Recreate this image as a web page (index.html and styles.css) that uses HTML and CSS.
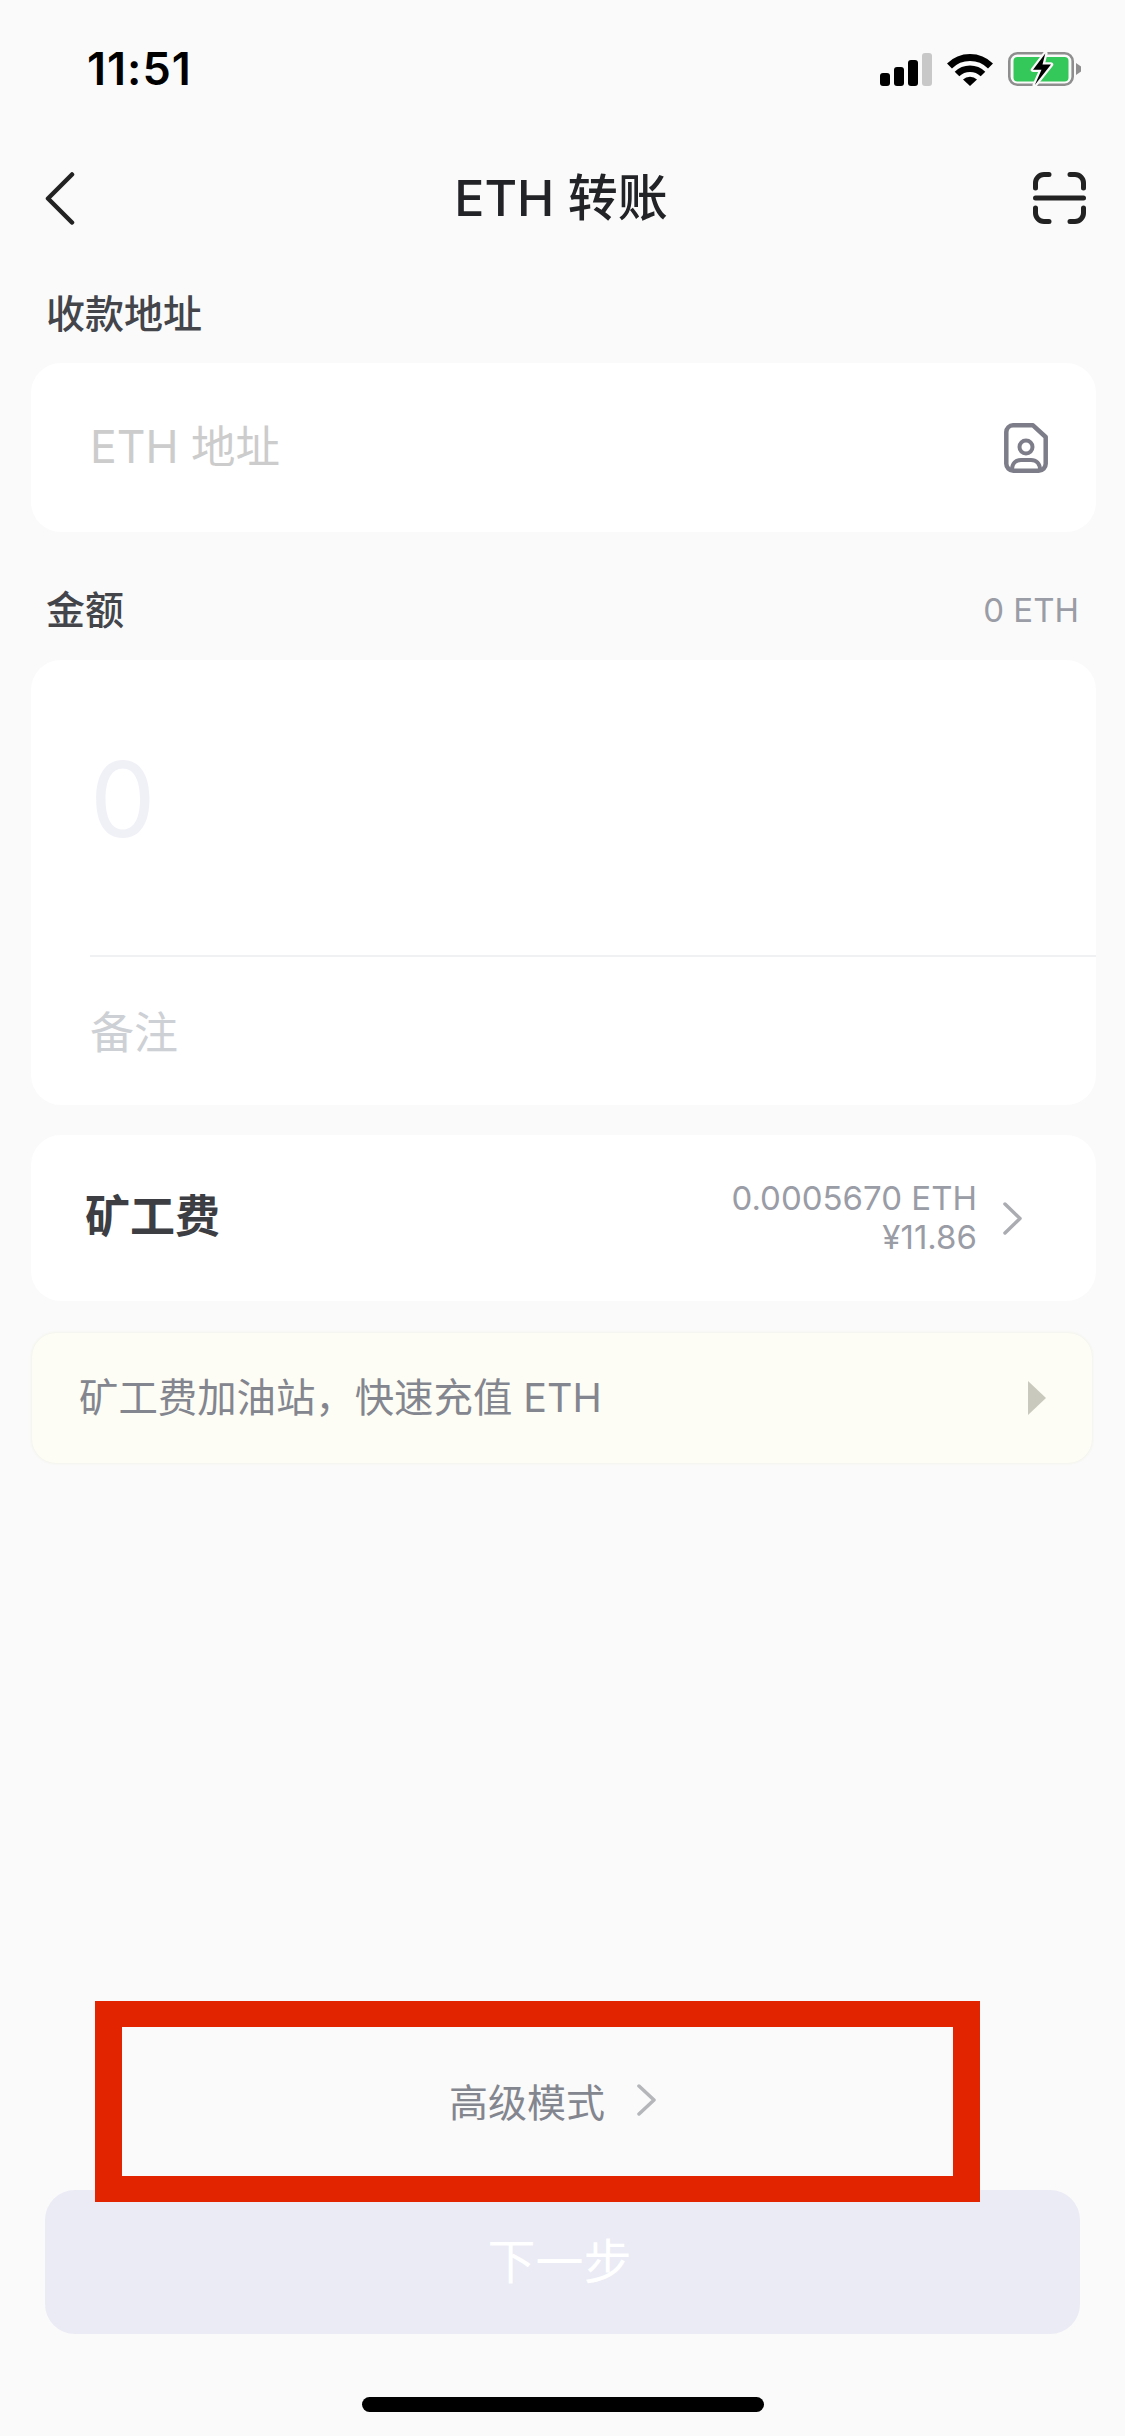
FILE: index.html
```html
<!DOCTYPE html>
<html lang="zh-CN">
<head>
<meta charset="utf-8">
<title>ETH 转账</title>
<link rel="stylesheet" href="styles.css">
</head>
<body>
<div class="page">
  <header class="status">
    <span class="time">11:51</span>
    <div class="status-icons">
      <svg class="i-signal" width="52" height="33" viewBox="0 0 52 33"><rect x="0" y="20" width="10" height="13" rx="3" fill="#000"/><rect x="14" y="14" width="10" height="19" rx="3" fill="#000"/><rect x="28" y="7" width="10" height="26" rx="3" fill="#000"/><rect x="42" y="0" width="10" height="33" rx="3" fill="#c8c8c8"/></svg>
      <svg class="i-wifi" width="46" height="33" viewBox="0 0 46 33"><path d="M2.500 13A29 29 0 0 1 43.500 13" fill="none" stroke="#000" stroke-width="7"/><path d="M10 21A18.500 18.500 0 0 1 36 21" fill="none" stroke="#000" stroke-width="6.500"/><path d="M16 26.500L23 33L30 26.500A10 10 0 0 0 16 26.500Z" fill="#000"/></svg>
      <svg class="i-batt" width="74" height="34" viewBox="0 0 74 34"><rect x="1.300" y="1.300" width="63.400" height="31.400" rx="8" fill="none" stroke="#8e8e8e" stroke-width="2.600"/><rect x="5.500" y="5" width="55" height="24.500" rx="4" fill="#34c759"/><path d="M68 11L73 14.500V19.500L68 23Z" fill="#8e8e8e"/><path d="M37.300 1.500L25 17.800H33.500L26.800 33L43 12.500H34.500Z" fill="#000" stroke="#fafafa" stroke-width="4.500" stroke-linejoin="round" paint-order="stroke"/></svg>
    </div>
  </header>

  <nav class="nav">
    <svg class="nav-back" width="30" height="53" viewBox="0 0 30 53"><path d="M27 2.500L3 26.500L27 50.500" fill="none" stroke="#222" stroke-width="4.500" stroke-linecap="round" stroke-linejoin="round"/></svg>
    <h1 class="title">ETH 转账</h1>
    <svg class="nav-scan" width="53" height="52" viewBox="0 0 53 52"><path d="M2.500 16V11A8.500 8.500 0 0 1 11 2.500H16M37 2.500H42A8.500 8.500 0 0 1 50.500 11V16M2.500 36V41A8.500 8.500 0 0 0 11 49.500H16M37 49.500H42A8.500 8.500 0 0 0 50.500 41V36" fill="none" stroke="#222" stroke-width="5" stroke-linecap="round"/><path d="M2.500 26H50.500" stroke="#222" stroke-width="5" stroke-linecap="round"/></svg>
  </nav>

  <div class="label label-first"><span>收款地址</span></div>
  <section class="card card-address">
    <span class="placeholder">ETH 地址</span>
    <svg width="44" height="50" viewBox="0 0 44 50"><path d="M9 2.300H29L41.700 14V40.700A7 7 0 0 1 34.700 47.700H9.300A7 7 0 0 1 2.300 40.700V9A7 7 0 0 1 9 2.300Z" fill="none" stroke="#7d7d8a" stroke-width="4.500" stroke-linejoin="round"/><circle cx="22" cy="24" r="6.500" fill="none" stroke="#7d7d8a" stroke-width="4"/><path d="M8 47C8 40 12 37 17 37H27C32 37 36 40 36 47" fill="none" stroke="#7d7d8a" stroke-width="4"/></svg>
  </section>

  <div class="label label-amount"><span>金额</span><span class="balance">0 ETH</span></div>
  <section class="card card-amount">
    <div class="amount-row"><span class="zero">0</span></div>
    <div class="note-row"><span class="note">备注</span></div>
  </section>

  <section class="card card-fee">
    <span class="fee-title">矿工费</span>
    <div class="fee-side">
      <div class="fee-values"><span>0.0005670 ETH</span><span>¥11.86</span></div>
      <svg width="20" height="33" viewBox="0 0 20 33"><path d="M2 2L17 16.500L2 31" fill="none" stroke="#aaacb2" stroke-width="3.500" stroke-linecap="round" stroke-linejoin="round"/></svg>
    </div>
  </section>

  <section class="banner">
    <span class="banner-text">矿工费加油站，快速充值 ETH</span>
    <svg width="18" height="34" viewBox="0 0 18 34"><path d="M0 0L18 17L0 34Z" fill="#c9c9bd"/></svg>
  </section>

  <div class="spacer"></div>

  <div class="advanced">
    <span>高级模式</span>
    <svg width="20" height="32" viewBox="0 0 20 32"><path d="M2 2L17 16L2 30" fill="none" stroke="#b4b6ba" stroke-width="3.500" stroke-linecap="round" stroke-linejoin="round"/></svg>
  </div>

  <button class="next" type="button">下一步</button>
  <div class="home-wrap"><div class="home"></div></div>

  <div class="annotation"></div>
</div>
</body>
</html>
```

FILE: styles.css
```css
* { box-sizing: border-box; }
html, body { margin: 0; padding: 0; }
body {
  background: #fafafa;
  font-family: Inter, "Noto Sans CJK SC", sans-serif;
}
.page {
  position: relative;
  width: 1125px;
  height: 2436px;
  display: flex;
  flex-direction: column;
  background: #fafafa;
  overflow: hidden;
}
.status {
  height: 138px;
  flex: none;
  display: flex;
  align-items: center;
  justify-content: space-between;
  padding: 0 43px 0 87px;
}
.time {
  font-size: 45px;
  font-weight: 600;
  letter-spacing: 1px;
  color: #000;
  line-height: 50px;
}
.status-icons {
  display: flex;
  align-items: center;
}
.i-wifi { margin-left: 15px; }
.i-batt { margin-left: 15px; }
.nav {
  height: 120px;
  flex: none;
  display: grid;
  grid-template-columns: 1fr auto 1fr;
  align-items: center;
  padding: 0 39px 0 45px;
}
.nav-scan { justify-self: end; }
.title {
  margin: 0 9px 0 0;
  font-size: 50px;
  font-weight: 500;
  color: #222326;
  line-height: 60px;
}
.label {
  flex: none;
  height: 56px;
  line-height: 56px;
  margin: 0 46px;
  font-size: 39px;
  font-weight: 500;
  color: #43454b;
  display: flex;
  justify-content: space-between;
  align-items: center;
}
.label-first { margin-top: 28px; margin-bottom: 21px; }
.label-amount { margin-top: 50px; margin-bottom: 22px; }
.balance {
  font-size: 33px;
  font-weight: 400;
  color: #9a9ca6;
}
.card {
  flex: none;
  margin: 0 29px 0 31px;
  background: #fff;
  border-radius: 30px;
}
.card-address {
  height: 169px;
  display: flex;
  align-items: center;
  justify-content: space-between;
  padding: 0 48px 0 59px;
}
.placeholder {
  font-size: 44.500px;
  color: #cccccc;
  margin-bottom: 8px;
}
.card-amount {
  height: 445px;
  display: flex;
  flex-direction: column;
  padding-left: 59px;
}
.amount-row {
  height: 297px;
  flex: none;
  border-bottom: 2px solid #f0f1f3;
  display: flex;
  align-items: center;
}
.zero {
  font-size: 104px;
  font-weight: 400;
  color: #f0f1f7;
  line-height: 120px;
  margin-bottom: 18px;
}
.note-row {
  flex: 1;
  display: flex;
  align-items: center;
}
.note {
  font-size: 44px;
  color: #cdd0d4;
  margin-bottom: 2px;
}
.card-fee {
  margin-top: 30px;
  height: 166px;
  display: flex;
  align-items: center;
  justify-content: space-between;
  padding: 0 73px 0 54px;
}
.fee-title {
  font-size: 45px;
  font-weight: 700;
  color: #3c3e43;
  margin-bottom: 10px;
}
.fee-side {
  display: flex;
  align-items: center;
  gap: 26px;
}
.fee-values {
  display: flex;
  flex-direction: column;
  align-items: flex-end;
  font-size: 33px;
  line-height: 39px;
  color: #9a9ca6;
}
.banner {
  flex: none;
  margin: 32px 33px 0 32px;
  height: 130px;
  border-radius: 24px;
  background: #fdfdf5;
  box-shadow: 0 0 3px #ecece0;
  display: flex;
  align-items: center;
  justify-content: space-between;
  padding: 0 46px 0 47px;
  font-size: 39.400px;
  color: #84868f;
}
.banner-text { margin-bottom: 8px; }
.spacer { flex: 1; }
.advanced {
  flex: none;
  height: 60px;
  display: flex;
  align-items: center;
  justify-content: center;
  gap: 32px;
  padding-right: 19px;
  font-size: 39px;
  color: #84868f;
  margin-bottom: 60px;
}
.next {
  flex: none;
  display: block;
  width: 1035px;
  height: 144px;
  margin: 0 45px;
  border: 0;
  border-radius: 30px;
  background: #eaebf5;
  color: #fff;
  font-family: inherit;
  font-size: 48px;
  padding: 0 6px 8px 0;
}
.home-wrap {
  flex: none;
  height: 102px;
  display: flex;
  justify-content: center;
  padding-top: 63px;
}
.home {
  width: 402px;
  height: 15px;
  border-radius: 8px;
  background: #000;
}
.annotation {
  position: absolute;
  left: 95px;
  top: 2001px;
  width: 885px;
  height: 201px;
  border: solid #e32400;
  border-width: 26px 27px;
}
```
